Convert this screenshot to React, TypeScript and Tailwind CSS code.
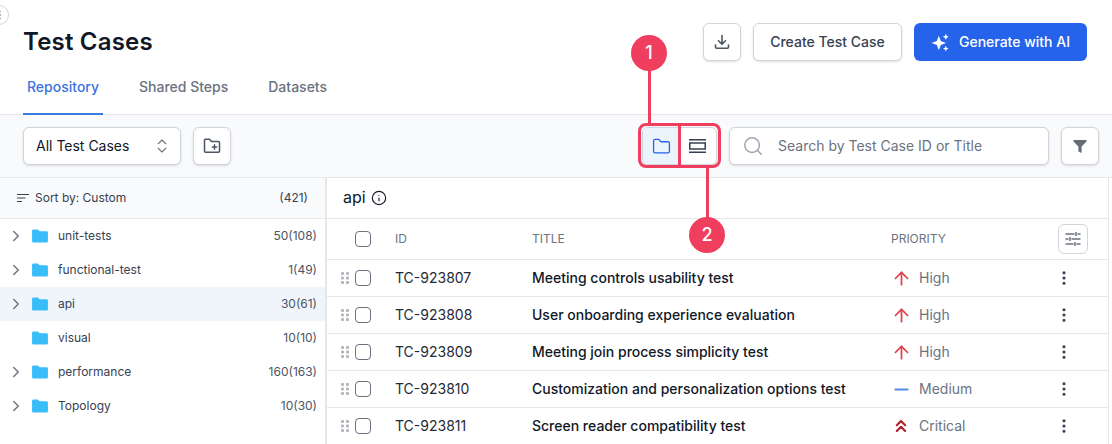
import React from "react";
import { ArrowUp, ChevronRight, ChevronsUp, ChevronsUpDown, Folder, Info, Minus, Search, EllipsisVertical } from "lucide-react";

const folders = [
  { name: "unit-tests", count: "50(108)", arrow: true },
  { name: "functional-test", count: "1(49)", arrow: true },
  { name: "api", count: "30(61)", arrow: true, active: true },
  { name: "visual", count: "10(10)", arrow: false },
  { name: "performance", count: "160(163)", arrow: true },
  { name: "Topology", count: "10(30)", arrow: true },
];

const cases = [
  { id: "TC-923807", title: "Meeting controls usability test", priority: "High" },
  { id: "TC-923808", title: "User onboarding experience evaluation", priority: "High" },
  { id: "TC-923809", title: "Meeting join process simplicity test", priority: "High" },
  { id: "TC-923810", title: "Customization and personalization options test", priority: "Medium" },
  { id: "TC-923811", title: "Screen reader compatibility test", priority: "Critical" },
];

function PriorityIcon({ p }: { p: string }) {
  if (p === "High") return <ArrowUp size={21} strokeWidth={2} className="text-[#e2424f]" />;
  if (p === "Medium") return <Minus size={21} strokeWidth={2.1} className="text-[#4f8ce8]" />;
  return <ChevronsUp size={20} strokeWidth={2.6} className="text-[#b3202c]" />;
}

function Grip() {
  return (
    <svg width="8" height="14" viewBox="0 0 8 14" fill="#b4b8bf">
      {[1, 5.5, 10].map((y) => (
        <g key={y}>
          <rect x="0" y={y} width="3" height="3" rx="0.8" />
          <rect x="5" y={y} width="3" height="3" rx="0.8" />
        </g>
      ))}
    </svg>
  );
}

function Check() {
  return <div className="w-4 h-4 rounded-[4px] border border-[#6b7280] bg-white shrink-0" />;
}

function Sparkle() {
  return (
    <svg width="19" height="19" viewBox="0 0 19 19" fill="white">
      <path d="M7.800 2.800 9.800 8 15 10l-5.200 2L7.800 17.200 5.800 12 .6 10l5.200-2z" />
      <path d="M14.800 .6l.9 2.300 2.300.9-2.300.9-.9 2.300-.9-2.300-2.300-.9 2.300-.9z" />
      <path d="M14.800 12.800l.8 2 2 .8-2 .8-.8 2-.8-2-2-.8 2-.8z" />
    </svg>
  );
}

export default function App() {
  return (
    <div className="relative w-[1112px] h-[444px] overflow-hidden bg-white text-[#111827] font-['Inter',sans-serif]">
      {/* header */}
      <header className="h-[115px] border-b border-[#e5e7eb] pl-[23px] pr-[25px] relative">
        <div className="flex justify-between pt-[23px]">
          <h1 className="text-2xl leading-[38px] font-semibold tracking-[0.2px]">Test Cases</h1>
          <div className="flex gap-3">
            <button className="w-[38px] h-[38px] flex items-center justify-center rounded-md border border-[#d1d5db] bg-white shadow-sm">
              <svg width="18" height="18" viewBox="0 0 18 18" fill="none" stroke="#4b5563" strokeWidth="1.6" strokeLinecap="round" strokeLinejoin="round">
                <path d="M9 2.500v8.500M5.500 7.800 9 11.200l3.500-3.400M2.500 12v2a1.200 1.200 0 0 0 1.200 1.200h10.600a1.200 1.200 0 0 0 1.200-1.200V12" />
              </svg>
            </button>
            <button className="w-[149px] h-[38px] rounded-md border border-[#d1d5db] bg-white shadow-sm text-sm font-medium text-[#374151]">Create Test Case</button>
            <button className="w-[173px] h-[38px] rounded-md bg-[#2563eb] text-white text-sm font-medium flex items-center justify-center gap-[9px]">
              <Sparkle />
              Generate with AI
            </button>
          </div>
        </div>
        <nav className="flex absolute left-[23px] bottom-[-1px] text-sm font-medium text-[#6b7280]">
          <div className="w-[80px] h-[38px] text-center leading-[20px] border-b-2 border-[#3b7ade] text-[#3b72e0]">Repository</div>
          <div className="ml-[36px] leading-[20px]">Shared Steps</div>
          <div className="ml-[40px] leading-[20px]">Datasets</div>
        </nav>
      </header>

      {/* toolbar */}
      <div className="h-[63px] bg-[#f9fafb] border-b border-[#e5e7eb] pl-[23px] pr-[13px] flex items-center justify-between">
        <div className="flex gap-3">
          <div className="w-[158px] h-[38px] rounded-md border border-[#d1d5db] bg-white shadow-sm flex items-center justify-between pl-3 pr-[9px] text-sm text-[#111827]">
            All Test Cases
            <ChevronsUpDown size={18} strokeWidth={1.5} className="text-[#6b7280]" />
          </div>
          <button className="w-[38px] h-[38px] rounded-md border border-[#d1d5db] bg-white shadow-sm flex items-center justify-center">
            <svg width="18" height="16" viewBox="0 0 18 16" fill="none" stroke="#4b5563" strokeWidth="1.5" strokeLinejoin="round" strokeLinecap="round">
              <path d="M1.500 2.200a1 1 0 0 1 1-1h4l2 2.300h7a1 1 0 0 1 1 1v8.800a1 1 0 0 1-1 1h-13a1 1 0 0 1-1-1z" />
              <path d="M11.500 6.800v4.400M9.300 9h4.400" />
            </svg>
          </button>
        </div>
        <div className="flex gap-3">
          <div className="w-[75px] h-[38px] rounded-md border border-[#d1d5db] bg-white shadow-sm flex overflow-hidden">
            <div className="w-[36px] bg-[#ebf3fd] flex items-center justify-center">
              <Folder size={19} strokeWidth={1.6} className="text-[#2563eb]" />
            </div>
            <div className="flex-1 flex items-center justify-center">
              <svg width="17" height="14" viewBox="0 0 17 14" fill="none" stroke="#374151" strokeWidth="1.5">
                <path d="M0 .75h17M0 13.250h17" />
                <rect x=".75" y="4" width="15.500" height="6" />
              </svg>
            </div>
          </div>
          <div className="w-[320px] h-[38px] rounded-md border border-[#d1d5db] bg-white shadow-sm flex items-center pl-[12px] gap-[14px] text-sm text-[#6b7280]">
            <Search size={22} strokeWidth={1.6} className="text-[#9ca3af]" />
            Search by Test Case ID or Title
          </div>
          <button className="w-[38px] h-[38px] rounded-md border border-[#d1d5db] bg-white shadow-sm flex items-center justify-center">
            <svg width="14" height="15" viewBox="0 0 14 15" fill="#666c76"><path d="M0.500 1h13v1.600L8.600 7.600V14L5.400 12.500V7.600L0.500 2.600z" /></svg>
          </button>
        </div>
      </div>

      {/* body */}
      <div className="flex h-[266px]">
        <aside className="w-[327px] shrink-0 border-r-2 border-[#e5e7eb] text-xs text-[#374151]">
          <div className="h-[41px] bg-[#f9fafb] border-b border-[#e5e7eb] flex items-center justify-between pl-[17px] pr-[17px]">
            <div className="flex items-center gap-[6px]">
              <svg width="12" height="12" viewBox="0 0 12 12" fill="none" stroke="#374151" strokeWidth="1.2"><path d="M0 2.500h12M0 6h8.500M0 9.500h5" /></svg>
              Sort by: Custom
            </div>
            <span>(421)</span>
          </div>
          {folders.map((f) => (
            <div key={f.name} className={`h-[34px] flex items-center pl-[10px] pr-[8px] ${f.active ? "bg-[#f0f5fc]" : ""}`}>
              <div className="w-[12px] mr-[10px] flex justify-center">
                {f.arrow && <ChevronRight size={18} strokeWidth={1.9} className="text-[#6b7280] shrink-0" />}
              </div>
              <svg width="16" height="14" viewBox="0 0 17 15" fill="#38bdf8" className="shrink-0 mr-[10px]">
                <path d="M1.500 0.500h4.700l2 2h7.300a1.500 1.500 0 0 1 1.500 1.500v9a1.500 1.500 0 0 1-1.500 1.500h-14a1.500 1.500 0 0 1-1.500-1.500v-11a1.500 1.500 0 0 1 1.500-1.500z" />
              </svg>
              <span className="flex-1">{f.name}</span>
              <span className="text-[#4b5563]">{f.count}</span>
            </div>
          ))}
        </aside>
        <main className="w-[782px] border-r border-[#e5e7eb]">
          <div className="h-[41px] border-b border-[#e5e7eb] flex items-center pl-4 gap-[5px] text-base leading-6 pb-[2px]">
            api
            <Info size={16} strokeWidth={1.7} className="mt-[1px]" />
          </div>
          <div className="h-[41px] border-b border-[#e5e7eb] flex items-center text-xs text-[#6b7280]">
            <div className="w-[28px]" />
            <Check />
            <div className="w-[137px] ml-[24px]">ID</div>
            <div className="w-[359px]">TITLE</div>
            <div className="flex-1">PRIORITY</div>
            <button className="w-[30px] h-[30px] mr-[20px] rounded-md border border-[#d1d5db] flex items-center justify-center">
              <svg width="18" height="18" viewBox="0 0 18 18" fill="none" stroke="#6b7280" strokeWidth="1.500">
                <path d="M1.500 4h9M13.500 4h3M12 2v4M1.500 9h3M7.500 9h9M6 7v4M1.500 14h8M12.500 14h4M11 12v4" />
              </svg>
            </button>
          </div>
          {cases.map((c) => (
            <div key={c.id} className="h-[37px] border-b border-[#e5e7eb] flex items-center text-sm">
              <div className="w-[28px] pl-[14px] flex"><Grip /></div>
              <Check />
              <div className="w-[137px] ml-[24px] text-[#1f2937]">{c.id}</div>
              <div className="w-[359px] font-medium text-[#111827]">{c.title}</div>
              <div className="flex-1 flex items-center text-[#6b7280]">
                <div className="w-[24px] ml-[-2px] mr-[6px] flex justify-center"><PriorityIcon p={c.priority} /></div>
                {c.priority}
              </div>
              <EllipsisVertical size={18} strokeWidth={2.2} className="mr-[35px] text-[#374151]" />
            </div>
          ))}
        </main>
      </div>

      {/* corner handle */}
      <div className="absolute left-[-11px] top-[5px] w-5 h-5 rounded-full border border-[#d1d5db] bg-white flex items-center justify-center">
        <EllipsisVertical size={12} className="ml-[1px] text-[#9ca3af]" />
      </div>

      {/* annotations */}
      <div className="absolute left-[638px] top-[123px] w-[83px] h-[45px] rounded-[8px] border-[3px] border-[#f03e5f]" />
      <div className="absolute left-[678px] top-[124px] w-[3px] h-[43px] bg-[#f03e5f]" />
      <div className="absolute left-[648px] top-[70px] w-[3px] h-[54px] bg-[#f03e5f]" />
      <div className="absolute left-[706px] top-[167px] w-[3px] h-[51px] bg-[#f03e5f]" />
      <div className="absolute left-[631px] top-[35px] w-9 h-9 rounded-full bg-[#f03e5f] text-white flex items-center justify-center text-lg font-medium">1</div>
      <div className="absolute left-[689px] top-[217px] w-9 h-9 rounded-full bg-[#f03e5f] text-white flex items-center justify-center text-lg font-medium">2</div>
    </div>
  );
}
